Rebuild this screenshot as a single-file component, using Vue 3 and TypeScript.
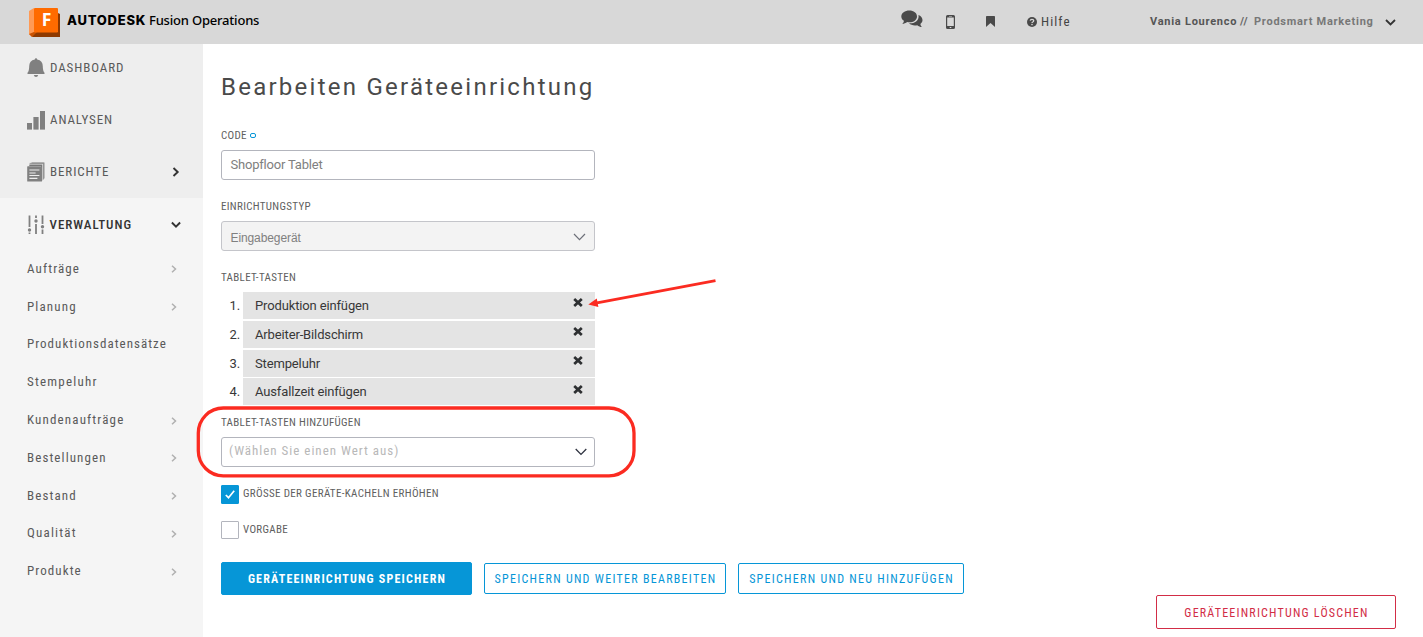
<script setup lang="ts">
import { ref } from 'vue'

interface SubItem {
  label: string
  track: number
  expandable: boolean
}

const subItems: SubItem[] = [
  { label: 'Aufträge', track: 1.12, expandable: true },
  { label: 'Planung', track: 1.15, expandable: true },
  { label: 'Produktionsdatensätze', track: 1.02, expandable: false },
  { label: 'Stempeluhr', track: 1.22, expandable: false },
  { label: 'Kundenaufträge', track: 1.15, expandable: true },
  { label: 'Bestellungen', track: 1.1, expandable: true },
  { label: 'Bestand', track: 1.12, expandable: true },
  { label: 'Qualität', track: 1.2, expandable: true },
  { label: 'Produkte', track: 1.08, expandable: true },
]

const tabletButtons = ref<string[]>([
  'Produktion einfügen',
  'Arbeiter-Bildschirm',
  'Stempeluhr',
  'Ausfallzeit einfügen',
])

const enlargeTiles = ref(true)
const isDefault = ref(false)

function removeButton(index: number) {
  tabletButtons.value.splice(index, 1)
}
</script>

<template>
  <div class="app">
    <header class="topbar">
      <div class="brand">
        <svg class="logo" width="31" height="30" viewBox="0 0 31 30">
          <path d="M0 3 L5 0 V24 L3 29 L0 26 Z" fill="#ff9a55" />
          <path d="M29 5 L31 6 V29 H3 L5 24 H29 Z" fill="#8f3a00" />
          <path d="M3 29 L0 26 L5 24 H8 Z" fill="#c95200" />
          <rect x="5" y="0" width="24" height="24.5" rx="1" fill="#ff6b00" />
          <text class="logo-letter" x="17.5" y="18.3" text-anchor="middle" fill="#fff">F</text>
        </svg>
        <span class="brand-name">AUTODESK</span>
        <span class="brand-product">Fusion Operations</span>
      </div>
      <nav class="tools">
        <svg class="ic-chat" width="22" height="18" viewBox="0 0 22 18" fill="#4a4a4a">
          <path d="M8.3 .5 C12.7 .5 16 3.1 16 6.4 C16 9.7 12.7 12.3 8.3 12.3 C7.6 12.3 6.9 12.2 6.2 12.1 C4.8 13.3 3 13.9 1.3 14 C2.2 13.1 2.8 12 2.9 10.8 C1.3 9.7 .3 8.2 .3 6.4 C.3 3.1 3.9 .5 8.3 .5 Z" />
          <path d="M17.4 5 C19.9 5.9 21.5 7.8 21.5 10 C21.5 11.6 20.7 12.9 19.4 13.9 C19.5 15.1 20.1 16.1 21 17 C19.2 16.9 17.6 16.3 16.2 15.2 C12.8 15.8 9.8 15 8 13.3 C13.6 13.6 17.6 10.5 17.6 6.4 C17.6 5.9 17.5 5.4 17.4 5 Z" />
        </svg>
        <svg class="ic-phone" width="9" height="14" viewBox="0 0 9 14">
          <path fill-rule="evenodd" fill="#4a4a4a" d="M1.5 0 H7.5 Q9 0 9 1.5 V12.5 Q9 14 7.5 14 H1.5 Q0 14 0 12.5 V1.5 Q0 0 1.5 0 Z M1.2 2.6 V11 H7.8 V2.6 Z M3 1 V1.5 H6 V1 Z M3.7 12.1 V13 H5.3 V12.1 Z" />
        </svg>
        <svg class="ic-mark" width="9" height="11" viewBox="0 0 9 11">
          <path d="M0 .8 Q0 0 .8 0 H8.2 Q9 0 9 .8 V11 L4.5 6.9 L0 11 Z" fill="#4a4a4a" />
        </svg>
        <svg class="ic-help" width="10" height="10" viewBox="0 0 10 10">
          <circle cx="5" cy="5" r="5" fill="#4a4a4a" />
          <path d="M3.2 3.7 Q3.4 2.3 5 2.3 Q6.7 2.3 6.7 3.7 Q6.7 4.5 5.7 5 Q5 5.3 5 6" fill="none" stroke="#d8d8d8" stroke-width="1.3" />
          <rect x="4.3" y="6.9" width="1.4" height="1.3" fill="#d8d8d8" />
        </svg>
        <span class="help">Hilfe</span>
      </nav>
      <div class="account">
        <span class="user">Vania Lourenco</span>
        <span class="slashes">//</span>
        <span class="company">Prodsmart Marketing</span>
        <svg class="caret" width="11" height="7" viewBox="0 0 11 7">
          <path d="M1 1 L5.5 5.5 L10 1" fill="none" stroke="#333" stroke-width="1.8" />
        </svg>
      </div>
    </header>

    <div class="body">
      <aside class="sidebar">
        <div class="primary">
          <a class="nav dashboard">
            <svg width="18" height="20" viewBox="0 0 18 20" fill="#808080">
              <path d="M7.8 1.6 Q7.8 .3 9 .3 Q10.2 .3 10.2 1.6 Q15.8 2.7 15.8 8.3 Q15.8 13.2 17.5 14.8 V16 H.5 V14.8 Q2.2 13.2 2.2 8.3 Q2.2 2.7 7.8 1.6 Z" />
              <path d="M6.8 17 H11.2 Q10.8 19 9 19 Q7.2 19 6.8 17 Z" />
            </svg>
            <span>DASHBOARD</span>
          </a>
          <a class="nav analysen">
            <svg width="18" height="20" viewBox="0 0 18 20" fill="#808080">
              <rect x="0" y="13" width="5" height="6.6" />
              <rect x="6.4" y="7" width="5.2" height="12.6" />
              <rect x="13" y="1" width="5" height="18.6" />
            </svg>
            <span>ANALYSEN</span>
          </a>
          <a class="nav berichte">
            <svg width="18" height="20" viewBox="0 0 18 20">
              <path d="M4.5 .4 H17.4 V16.5 H16 V2 H4.5 Z" fill="#777" />
              <path d="M2.3 2.6 H15.3 V18.5 H14 V4 H2.3 Z" fill="#777" />
              <path d="M2.6 1.4 H16.4 V17.5" fill="none" stroke="#999" stroke-width="1" />
              <rect x=".2" y="4.2" width="14.8" height="15.4" rx=".6" fill="#808080" />
              <path d="M2.4 8 H12.4 M2.4 11 H8.6 M2.4 13.5 H12.4 M2.4 16.4 H10.4" stroke="#eee" stroke-width="1.2" />
            </svg>
            <span>BERICHTE</span>
            <svg class="arrow" width="8" height="10" viewBox="0 0 8 10">
              <path d="M1.5 1 L5.7 5 L1.5 9" fill="none" stroke="#333" stroke-width="1.9" />
            </svg>
          </a>
        </div>
        <div class="secondary">
          <a class="nav verwaltung">
            <svg width="18" height="20" viewBox="0 0 18 20" stroke="#808080" fill="#808080">
              <path d="M2.5 .5 V12 M2.5 17.5 V19 M9 .5 V3 M9 9 V19 M15.5 .5 V9 M15.5 14.5 V19" stroke-width="1.8" fill="none" />
              <circle cx="2.5" cy="15" r="1.7" stroke="none" />
              <circle cx="9" cy="6" r="1.7" stroke="none" />
              <circle cx="15.5" cy="11.7" r="1.7" stroke="none" />
            </svg>
            <span>VERWALTUNG</span>
            <svg class="arrow" width="10" height="8" viewBox="0 0 10 8">
              <path d="M.9 1.5 L5 5.6 L9.1 1.5" fill="none" stroke="#333" stroke-width="1.9" />
            </svg>
          </a>
          <a v-for="item in subItems" :key="item.label" class="sub">
            <span :style="{ letterSpacing: item.track + 'px' }">{{ item.label }}</span>
            <svg v-if="item.expandable" width="6" height="8" viewBox="0 0 6 8">
              <path d="M1 .7 L4.5 4 L1 7.3" fill="none" stroke="#b0b0b0" stroke-width="1.5" />
            </svg>
          </a>
        </div>
      </aside>

      <main class="content">
        <h1>Bearbeiten Geräteeinrichtung</h1>

        <label class="field-label code-label">CODE <i class="required"></i></label>
        <div class="input">Shopfloor Tablet</div>

        <label class="field-label">EINRICHTUNGSTYP</label>
        <div class="input disabled">
          <span>Eingabegerät</span>
          <svg width="13" height="8" viewBox="0 0 13 8">
            <path d="M1 1 L6.5 6.6 L12 1" fill="none" stroke="#6c6f78" stroke-width="1.2" />
          </svg>
        </div>

        <label class="field-label">TABLET-TASTEN</label>
        <ol class="buttons-list">
          <li v-for="(name, i) in tabletButtons" :key="name">
            <span class="num">{{ i + 1 }}.</span>
            <span class="tile">
              {{ name }}
              <svg width="10" height="9" viewBox="0 0 10 9" @click="removeButton(i)">
                <path d="M1.2 1 L8.8 8 M8.8 1 L1.2 8" stroke="#2d2f31" stroke-width="2.7" />
              </svg>
            </span>
          </li>
        </ol>

        <label class="field-label add-label">TABLET-TASTEN HINZUFÜGEN</label>
        <div class="input select">
          <span>(Wählen Sie einen Wert aus)</span>
          <svg width="12" height="8" viewBox="0 0 12 8">
            <path d="M.7 1 L6 6.4 L11.3 1" fill="none" stroke="#2f3340" stroke-width="1.3" />
          </svg>
        </div>

        <div class="check-row first" @click="enlargeTiles = !enlargeTiles">
          <span class="box" :class="{ on: enlargeTiles }">
            <svg v-if="enlargeTiles" width="10" height="9" viewBox="0 0 10 9">
              <path d="M.8 5 L3.5 7.7 L9.2 .8" fill="none" stroke="#fff" stroke-width="1.7" />
            </svg>
          </span>
          <span class="check-label">GRÖSSE DER GERÄTE-KACHELN ERHÖHEN</span>
        </div>
        <div class="check-row" @click="isDefault = !isDefault">
          <span class="box" :class="{ on: isDefault }"></span>
          <span class="check-label">VORGABE</span>
        </div>

        <div class="actions">
          <button class="btn solid">GERÄTEEINRICHTUNG SPEICHERN</button>
          <button class="btn outline weiter">SPEICHERN UND WEITER BEARBEITEN</button>
          <button class="btn outline neu">SPEICHERN UND NEU HINZUFÜGEN</button>
        </div>
        <div class="danger-row">
          <button class="btn danger">GERÄTEEINRICHTUNG LÖSCHEN</button>
        </div>
      </main>
    </div>

    <svg class="annotations" width="1423" height="637" viewBox="0 0 1423 637">
      <rect x="198.3" y="408" width="435.7" height="67.8" rx="25" fill="none" stroke="#fb2b21" stroke-width="3.3" />
      <path d="M715.5 280.7 L597 302.8" stroke="#fb2b21" stroke-width="2.8" />
      <path d="M588.3 304.4 L596.8 298.6 L598.4 307 Z" fill="#fb2b21" />
    </svg>
  </div>
</template>

<style>
body {
  margin: 0;
  background: #fff;
}
</style>

<style scoped>
.app {
  position: relative;
  width: 1423px;
  height: 637px;
  overflow: hidden;
  font-family: Roboto, "Liberation Sans", sans-serif;
  font-size: 13px;
  color: #444;
}
.app * {
  box-sizing: border-box;
}
svg {
  display: block;
  flex: none;
}
.topbar {
  display: flex;
  height: 44px;
  background: #d8d8d8;
}
.brand {
  display: flex;
  width: 901px;
  padding: 8px 0 0 29px;
  color: #000;
}
.logo-letter {
  font: 700 17.5px "Noto Sans", sans-serif;
}
.brand-name {
  width: 84px;
  margin-left: 7px;
  font: 800 13px/24px Inter, "Open Sans", sans-serif;
  letter-spacing: 0.75px;
}
.brand-product {
  margin-left: -2px;
  font: 500 13px/24px "Noto Sans", sans-serif;
  letter-spacing: -0.2px;
}
.tools {
  display: flex;
  width: 249px;
}
.ic-chat {
  margin-top: 10px;
}
.ic-phone {
  margin: 15px 0 0 23px;
}
.ic-mark {
  margin: 16px 0 0 31px;
}
.ic-help {
  margin: 17px 0 0 32px;
}
.help {
  margin-left: 4px;
  font-stretch: 75%;
  line-height: 43px;
  letter-spacing: 1.1px;
}
.account {
  display: flex;
  font-size: 11px;
  font-weight: 700;
  line-height: 44px;
  letter-spacing: 0.74px;
}
.user {
  width: 90px;
  color: #555;
}
.slashes {
  width: 14px;
  color: #666;
}
.company {
  width: 131px;
  color: #777;
}
.caret {
  margin-top: 19px;
}
.body {
  display: flex;
  height: 593px;
}
.sidebar {
  width: 203px;
  background: #f5f5f5;
}
.primary {
  height: 154px;
  background: #eee;
}
.nav {
  display: flex;
  align-items: center;
  height: 52px;
  padding: 0 23px 0 27px;
  font-stretch: 75%;
  letter-spacing: 0.9px;
  color: #5a5a5a;
}
.nav span {
  margin-left: 5px;
  padding-bottom: 2px;
}
.nav .arrow {
  margin-left: auto;
}
.dashboard {
  height: 50px;
  padding-bottom: 2px;
}
.verwaltung {
  padding: 2px 22px 0 27px;
  font-weight: 500;
  letter-spacing: 0.98px;
  color: #333;
}
.verwaltung span {
  margin-left: 4.5px;
}
.sub {
  display: flex;
  align-items: center;
  justify-content: space-between;
  height: 37.8px;
  padding: 0 26px 0 27px;
  font-stretch: 75%;
  color: #5a5a5a;
}
.sub span {
  padding-bottom: 1px;
}
.sub svg {
  margin-top: 1px;
}
.content {
  flex: 1;
  padding: 0 27px 0 18px;
}
h1 {
  margin: 0;
  height: 84px;
  font-size: 24px;
  font-weight: 400;
  line-height: 86px;
  letter-spacing: 2.25px;
  color: #4a4a4a;
}
.field-label {
  display: flex;
  align-items: center;
  height: 14px;
  margin: 19px 0 8px;
  font-size: 11px;
  font-stretch: 75%;
  letter-spacing: 0.32px;
  white-space: pre;
  color: #606060;
}
.code-label {
  margin-top: 0;
}
.required {
  width: 6px;
  height: 5px;
  border: 1px solid #0696d7;
  border-radius: 2px;
}
.input {
  display: flex;
  align-items: center;
  justify-content: space-between;
  width: 374px;
  height: 30px;
  padding: 0 8px 1px 8.5px;
  border: 1px solid #b3b5bd;
  border-radius: 3px;
  letter-spacing: -0.2px;
  color: #808080;
}
.disabled {
  padding-top: 2px;
  background: #f3f3f3;
  border-color: #c4c5ca;
  font: 12px "Liberation Sans", Arial, sans-serif;
  letter-spacing: -0.1px;
}
.disabled span {
  padding-top: 2px;
}
.select {
  padding: 0 7px 2px;
  font-stretch: 75%;
  letter-spacing: 0.98px;
  color: #b8b8b8;
}
.select span {
  padding-bottom: 1px;
}
.select svg {
  margin-top: 2px;
}
.buttons-list {
  margin: 0;
  padding: 0;
  height: 115px;
  list-style: none;
  color: #383838;
}
.buttons-list li {
  display: flex;
  height: 27px;
  margin-bottom: 1.8px;
  line-height: 27px;
  letter-spacing: -0.14px;
}
.buttons-list li:last-child {
  line-height: 28px;
}
.num {
  width: 22px;
  padding-right: 3px;
  text-align: right;
}
.tile {
  display: flex;
  justify-content: space-between;
  width: 352px;
  padding: 0 12px;
  background: #e4e4e4;
}
.tile svg {
  margin-top: 6px;
}
.buttons-list li:last-child svg {
  margin-top: 7px;
}
.add-label {
  margin-top: 8px;
}
.check-row {
  display: flex;
  height: 19px;
  margin-top: 17px;
}
.check-row.first {
  margin-top: 18px;
}
.box {
  display: flex;
  align-items: center;
  justify-content: center;
  width: 18px;
  height: 18px;
  border: 1px solid #b3b5bd;
  border-radius: 1px;
}
.box.on {
  height: 19px;
  border-color: #0696d7;
  background: #0696d7;
}
.check-label {
  margin-left: 4px;
  font-size: 11px;
  font-stretch: 75%;
  line-height: 17px;
  letter-spacing: 0.33px;
  color: #606060;
}
.actions {
  display: flex;
  align-items: center;
  gap: 12px;
  height: 33px;
  margin-top: 22px;
}
.btn {
  padding: 1px 0 0 1px;
  border: 1px solid #0696d7;
  border-radius: 2px;
  background: #fff;
  font-family: inherit;
  font-size: 12px;
  font-stretch: 75%;
  letter-spacing: 1.27px;
  color: #0696d7;
}
.solid {
  width: 251px;
  height: 33px;
  background: #0696d7;
  font-weight: 700;
  letter-spacing: 1.2px;
  color: #fff;
}
.weiter {
  width: 242px;
  height: 31px;
}
.neu {
  width: 226px;
  height: 31px;
}
.danger-row {
  display: flex;
  justify-content: flex-end;
}
.danger {
  width: 240px;
  height: 34px;
  padding-top: 2px;
  border-color: #d22d46;
  letter-spacing: 1.2px;
  color: #d22d46;
}
.annotations {
  position: absolute;
  top: 0;
  left: 0;
  pointer-events: none;
}
</style>
